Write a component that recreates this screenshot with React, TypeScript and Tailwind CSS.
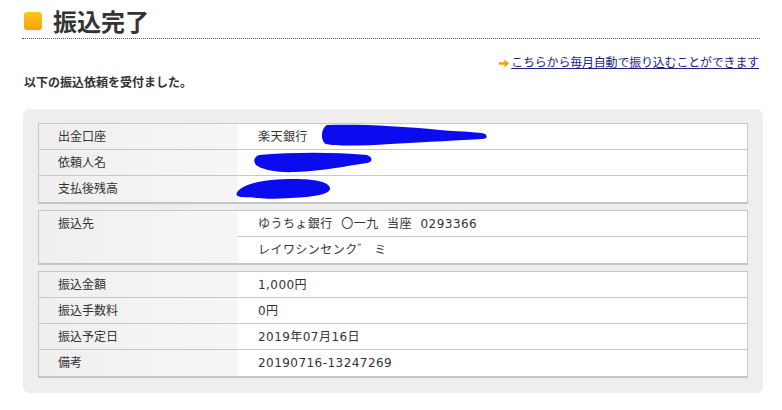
import React from 'react';

type Row = { label: string; value: React.ReactNode; blob?: React.ReactNode };

const Blob1 = () => (
  <svg className="absolute left-[82px] top-[0px]" width="168" height="22" viewBox="0 0 168 22">
    <path d="M7 1 C40 0 80 2 120 6 C145 8 160 8 165 10 C168 12 167 15 162 15 C140 16 110 18 70 20 C40 22 15 22 6 20 C1 18 0 5 7 1 Z" fill="#0b0bf0" />
  </svg>
);

const Blob2 = () => (
  <svg className="absolute left-[15px] top-[2px]" width="120" height="21" viewBox="0 0 120 21">
    <path d="M6 3 C40 0 80 0 114 3 C120 5 120 10 114 11 C92 14 72 19 42 20 C22 21 8 17 3 13 C0 9 1 5 6 3 Z" fill="#0b0bf0" />
  </svg>
);

const Blob3 = () => (
  <svg className="absolute left-[-3px] top-[2px]" width="97" height="22" viewBox="0 0 97 22">
    <path d="M3 13 C10 5 30 1 60 1 C80 1 94 4 95 10 C96 16 80 19 56 20 C40 21 30 21 24 20 C14 19 6 20 3 18 C1 17 1 15 3 13 Z" fill="#0b0bf0" />
  </svg>
);

const Table = ({ rows }: { rows: Row[] }) => (
  <div className="border border-[#c8c8c8] border-b-2 border-b-[#c4c4c4] bg-white">
    {rows.map((r, i) => (
      <div key={i} className={`flex h-[26px] ${i < rows.length - 1 ? 'border-b border-[#c8c8c8]' : ''}`}>
        <div className="w-[199px] bg-gradient-to-r from-[#efefef] to-[#f6f6f6] pl-[19px] flex items-center">{r.label}</div>
        <div className="flex-1 pl-[20px] flex items-center relative tracking-[0.45px]">
          {r.value}
          {r.blob}
        </div>
      </div>
    ))}
  </div>
);

const App: React.FC = () => {
  return (
    <div
      className="w-[782px] h-[410px] bg-white overflow-hidden text-[12px] text-[#333]"
      style={{ fontFamily: '"DejaVu Sans", "Noto Sans CJK JP", sans-serif' }}
    >
      <div className="mx-[22px] pt-[7px] h-[39px] border-b border-dotted border-[#555] flex items-start">
        <div className="w-[18px] h-[18px] mt-[5px] ml-[2px] rounded-[3px] bg-gradient-to-b from-[#ffc61f] to-[#f4a300]" />
        <h1 className="ml-[11px] text-[24px] leading-[28px] font-bold text-[#333]" style={{ fontFamily: '"Noto Sans CJK JP", sans-serif' }}>振込完了</h1>
      </div>

      <div className="flex justify-end items-center pr-[23px] mt-[16px] h-[16px]">
        <svg width="10" height="9" viewBox="0 0 10 9" className="mr-[2px]">
          <path d="M0 3.2 H5.5 V0.5 L10 4.5 L5.5 8.5 V5.8 H0 Z" fill="#f0a000" />
        </svg>
        <a href="#" className="text-[#1a2280] underline leading-[16px] tracking-[-0.2px]">こちらから毎月自動で振り込むことができます</a>
      </div>

      <p className="ml-[24px] mt-[4px] font-bold leading-[16px]">以下の振込依頼を受付ました。</p>

      <div className="ml-[23px] w-[740px] mt-[18px] bg-[#eeeeee] rounded-[7px] px-[15px] pt-[14px] pb-[15px] flex flex-col gap-[6px]">
        <Table
          rows={[
            { label: '出金口座', value: '楽天銀行', blob: <Blob1 /> },
            { label: '依頼人名', value: '', blob: <Blob2 /> },
            { label: '支払後残高', value: '', blob: <Blob3 /> },
          ]}
        />

        <div className="border border-[#c8c8c8] border-b-2 border-b-[#c4c4c4] bg-white flex">
          <div className="w-[199px] bg-gradient-to-r from-[#efefef] to-[#f6f6f6] pl-[19px] h-[52px]">
            <div className="h-[26px] flex items-center">振込先</div>
          </div>
          <div className="flex-1 tracking-[0.45px]">
            <div className="h-[26px] border-b border-[#c8c8c8] pl-[20px] flex items-center whitespace-pre">ゆうちょ銀行  〇一九  当座  0293366</div>
            <div className="h-[26px] pl-[20px] flex items-center">レイワシンセンク゛ ミ</div>
          </div>
        </div>

        <Table
          rows={[
            { label: '振込金額', value: '1,000円' },
            { label: '振込手数料', value: '0円' },
            { label: '振込予定日', value: '2019年07月16日' },
            { label: '備考', value: '20190716-13247269' },
          ]}
        />
      </div>
    </div>
  );
};

export default App;
